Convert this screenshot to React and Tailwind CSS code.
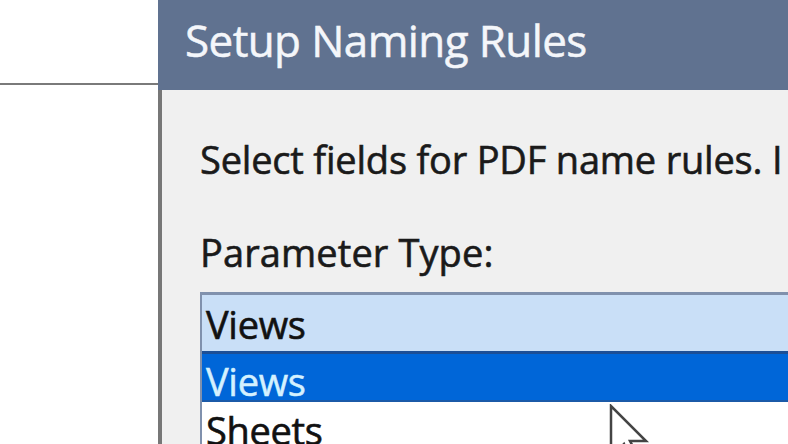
export default function App() {
  const font = { fontFamily: '"Open Sans", "Noto Sans", sans-serif' };
  return (
    <div className="w-[788px] h-[444px] overflow-hidden flex bg-white" style={font}>
      <div className="w-[158px] shrink-0 bg-white">
        <div className="mt-[83px] h-[2px] bg-[#7a7a7a]" />
      </div>
      <div className="flex-1 flex flex-col min-w-0 relative">
        <div className="h-[90px] bg-[#607290] pl-[27px] pt-[18px] shrink-0">
          <div className="text-[44px] leading-none text-[#f4f6fa] whitespace-nowrap tracking-[-0.6px] [-webkit-text-stroke:0.5px_currentColor]">Setup Naming Rules</div>
        </div>
        <div className="h-[3px] bg-[#f8f8f8]" />
        <div className="flex-1 bg-[#f0f0f0] border-l-[4px] border-[#777] pl-[38px] pt-[50px]">
          <div className="text-[38px] leading-none text-[#1a1a1a] whitespace-nowrap tracking-[-0.2px] [-webkit-text-stroke:0.6px_currentColor]">Select fields for PDF name rules. I</div>
          <div className="mt-[55px] text-[38px] leading-none text-[#1a1a1a] whitespace-nowrap tracking-[0.1px] [-webkit-text-stroke:0.6px_currentColor]">Parameter Type:</div>
          <div className="mt-[21px] border-t-[3px] border-l-[2px] border-[#8091ad] bg-white">
            <div className="h-[56px] bg-[#c9dff7] pl-[4px] pt-[10px] text-[38px] leading-none text-[#111] tracking-[-0.3px] [-webkit-text-stroke:0.6px_currentColor]">Views</div>
            <div className="h-[3px] bg-[#1c4f96]" />
            <div className="h-[46px] bg-[#0066d8] pl-[4px] pt-[8px] text-[38px] leading-none text-[#d4f1ff] tracking-[-0.3px] [-webkit-text-stroke:0.5px_currentColor]">Views</div>
            <div className="h-[2px] bg-[#1b5aa8]" />
            <div className="h-[60px] bg-white pl-[4px] pt-[9px] text-[38px] leading-none text-[#111] tracking-[-0.3px] [-webkit-text-stroke:0.6px_currentColor]">Sheets</div>
          </div>
        </div>
        <svg className="absolute left-[451px] top-[404px]" width="44" height="62" viewBox="0 0 44 62">
          <path d="M2 2 L2 53 L15 40 L24 60 L31 56 L21 37 L37 37 Z" fill="#fff" stroke="#444" strokeWidth="2.5" strokeLinejoin="miter" />
        </svg>
      </div>
    </div>
  );
}
